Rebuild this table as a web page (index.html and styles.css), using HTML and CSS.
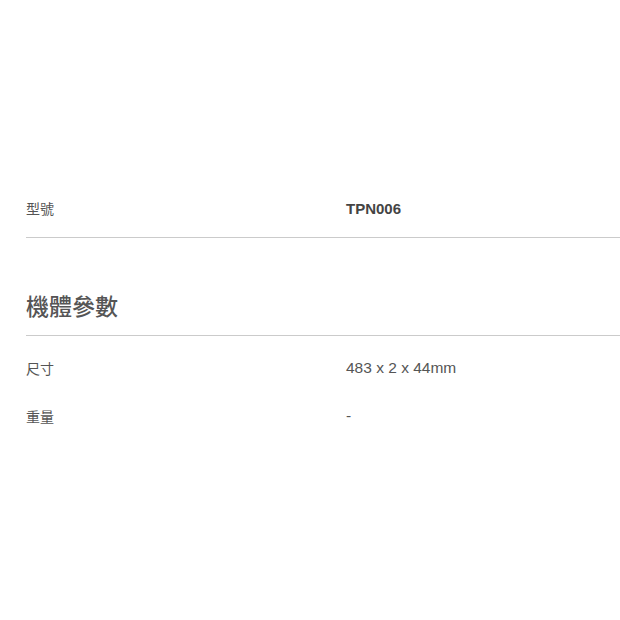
FILE: index.html
```html
<!DOCTYPE html>
<html lang="zh-Hant">
  <head>
    <meta charset="UTF-8" />
    <title>規格</title>
    <link rel="stylesheet" href="styles.css">
  </head>
  <body>
    <div class="spec">
      <div class="row first">
        <div class="label">型號</div>
        <div class="value bold">TPN006</div>
      </div>
      <div class="divider"></div>

      <h2 class="group-title">機體參數</h2>
      <div class="divider"></div>

      <div class="row">
        <div class="label">尺寸</div>
        <div class="value">483 x 2 x 44mm</div>
      </div>
      <div class="row">
        <div class="label">重量</div>
        <div class="value">-</div>
      </div>
    </div>
  </body>
</html>
```

FILE: styles.css
```css
body {
  margin: 0;
  padding: 0;
  background: #fff;
  color: #555;
  font-family: "Liberation Sans", Arial, "Noto Sans CJK TC", sans-serif;
}

.spec {
  padding: 198px 0 0 26px;
}

.row {
  display: flex;
  align-items: center;
  height: 20px;
  margin-bottom: 27px;
}

.row.first {
  margin-bottom: 19px;
}

.label {
  width: 320px;
  font-size: 14px;
  color: #555;
}

.value {
  font-size: 15.5px;
  color: #555;
}

.value.bold {
  font-size: 15px;
  font-weight: 700;
  color: #444;
}

.divider {
  height: 1px;
  background: #cbcbcb;
}

.group-title {
  margin: 53px 0 16px;
  font-size: 23px;
  font-weight: 500;
  line-height: 28px;
  color: #555;
  font-family: "Noto Sans CJK TC", sans-serif;
}

.divider + .row {
  margin-top: 22px;
  margin-bottom: 28px;
}
```
